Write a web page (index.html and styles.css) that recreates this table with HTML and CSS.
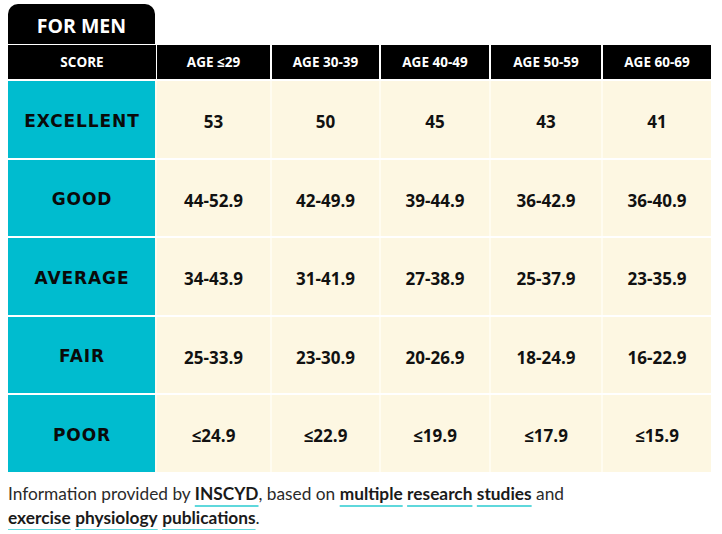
FILE: index.html
```html
<!DOCTYPE html>
<html>
<head>
<meta charset="utf-8">
<link rel="stylesheet" href="styles.css">
</head>
<body>
<div class="tab">FOR MEN</div>
<div class="table">
  <div class="row head">
    <div class="cell">SCORE</div>
    <div class="cell">AGE ≤29</div>
    <div class="cell">AGE 30-39</div>
    <div class="cell">AGE 40-49</div>
    <div class="cell">AGE 50-59</div>
    <div class="cell">AGE 60-69</div>
  </div>
  <div class="row body">
    <div class="cell label">EXCELLENT</div>
    <div class="cell">53</div><div class="cell">50</div><div class="cell">45</div><div class="cell">43</div><div class="cell">41</div>
  </div>
  <div class="row body">
    <div class="cell label">GOOD</div>
    <div class="cell">44-52.9</div><div class="cell">42-49.9</div><div class="cell">39-44.9</div><div class="cell">36-42.9</div><div class="cell">36-40.9</div>
  </div>
  <div class="row body">
    <div class="cell label">AVERAGE</div>
    <div class="cell">34-43.9</div><div class="cell">31-41.9</div><div class="cell">27-38.9</div><div class="cell">25-37.9</div><div class="cell">23-35.9</div>
  </div>
  <div class="row body">
    <div class="cell label">FAIR</div>
    <div class="cell">25-33.9</div><div class="cell">23-30.9</div><div class="cell">20-26.9</div><div class="cell">18-24.9</div><div class="cell">16-22.9</div>
  </div>
  <div class="row body">
    <div class="cell label">POOR</div>
    <div class="cell">≤24.9</div><div class="cell">≤22.9</div><div class="cell">≤19.9</div><div class="cell">≤17.9</div><div class="cell">≤15.9</div>
  </div>
</div>
<p class="note">Information provided by <a class="lnk">INSCYD</a>, based on <a class="lnk">multiple</a> <a class="lnk">research</a> <a class="lnk">studies</a> and <a class="lnk">exercise</a> <a class="lnk">physiology</a> <a class="lnk">publications</a>.</p>
</body>
</html>
```
FILE: styles.css
```css
html, body { background: #fff; }
body {
  margin: 4px 8px 0 8px;
  width: 703px;
}
.tab {
  width: 147px;
  height: 40px;
  box-sizing: border-box;
  padding-top: 3px;
  background: #000;
  color: #fff;
  border-radius: 10px 10px 0 0;
  font-family: "Open Sans", sans-serif;
  font-weight: 700;
  font-size: 19.5px;
  line-height: 37px;
  text-align: center;
  margin-bottom: 1px;
}
.table {
  display: flex;
  flex-direction: column;
  gap: 2px;
}
.row {
  display: grid;
  grid-template-columns: 147px 113px 107px 108px 110px 108px;
  column-gap: 2px;
}
.head {
  height: 34px;
}
.head .cell {
  background: #000;
  color: #fff;
  font-family: "Open Sans", sans-serif;
  font-weight: 700;
  font-size: 13.5px;
  display: flex;
  align-items: center;
  justify-content: center;
}
.head .cell:first-child { margin-right: -1px; }
.body {
  height: 76.5px;
  background: #fffcf0;
}
.body .cell {
  background: #fdf7e2;
  display: flex;
  align-items: center;
  justify-content: center;
  box-sizing: border-box;
  padding-top: 5px;
  font-family: "Open Sans", sans-serif;
  font-weight: 700;
  font-size: 17px;
  color: #111;
}
.body .cell.label {
  background: #00bccf;
  font-family: "DejaVu Sans", sans-serif;
  font-weight: 700;
  font-size: 17px;
  letter-spacing: 0.9px;
  color: #0a0a0a;
  padding-left: 1px;
  padding-top: 3px;
}
.note {
  margin: 10px 0 0 0;
  max-width: 600px;
  font-family: Lato, sans-serif;
  font-size: 17.3px;
  line-height: 24px;
  color: #2a2a2a;
}
.lnk {
  color: #1a1a1a;
  font-weight: 700;
  text-decoration: underline;
  text-decoration-color: #5fd8dc;
  text-decoration-thickness: 2px;
  text-underline-offset: 5px;
}
```
